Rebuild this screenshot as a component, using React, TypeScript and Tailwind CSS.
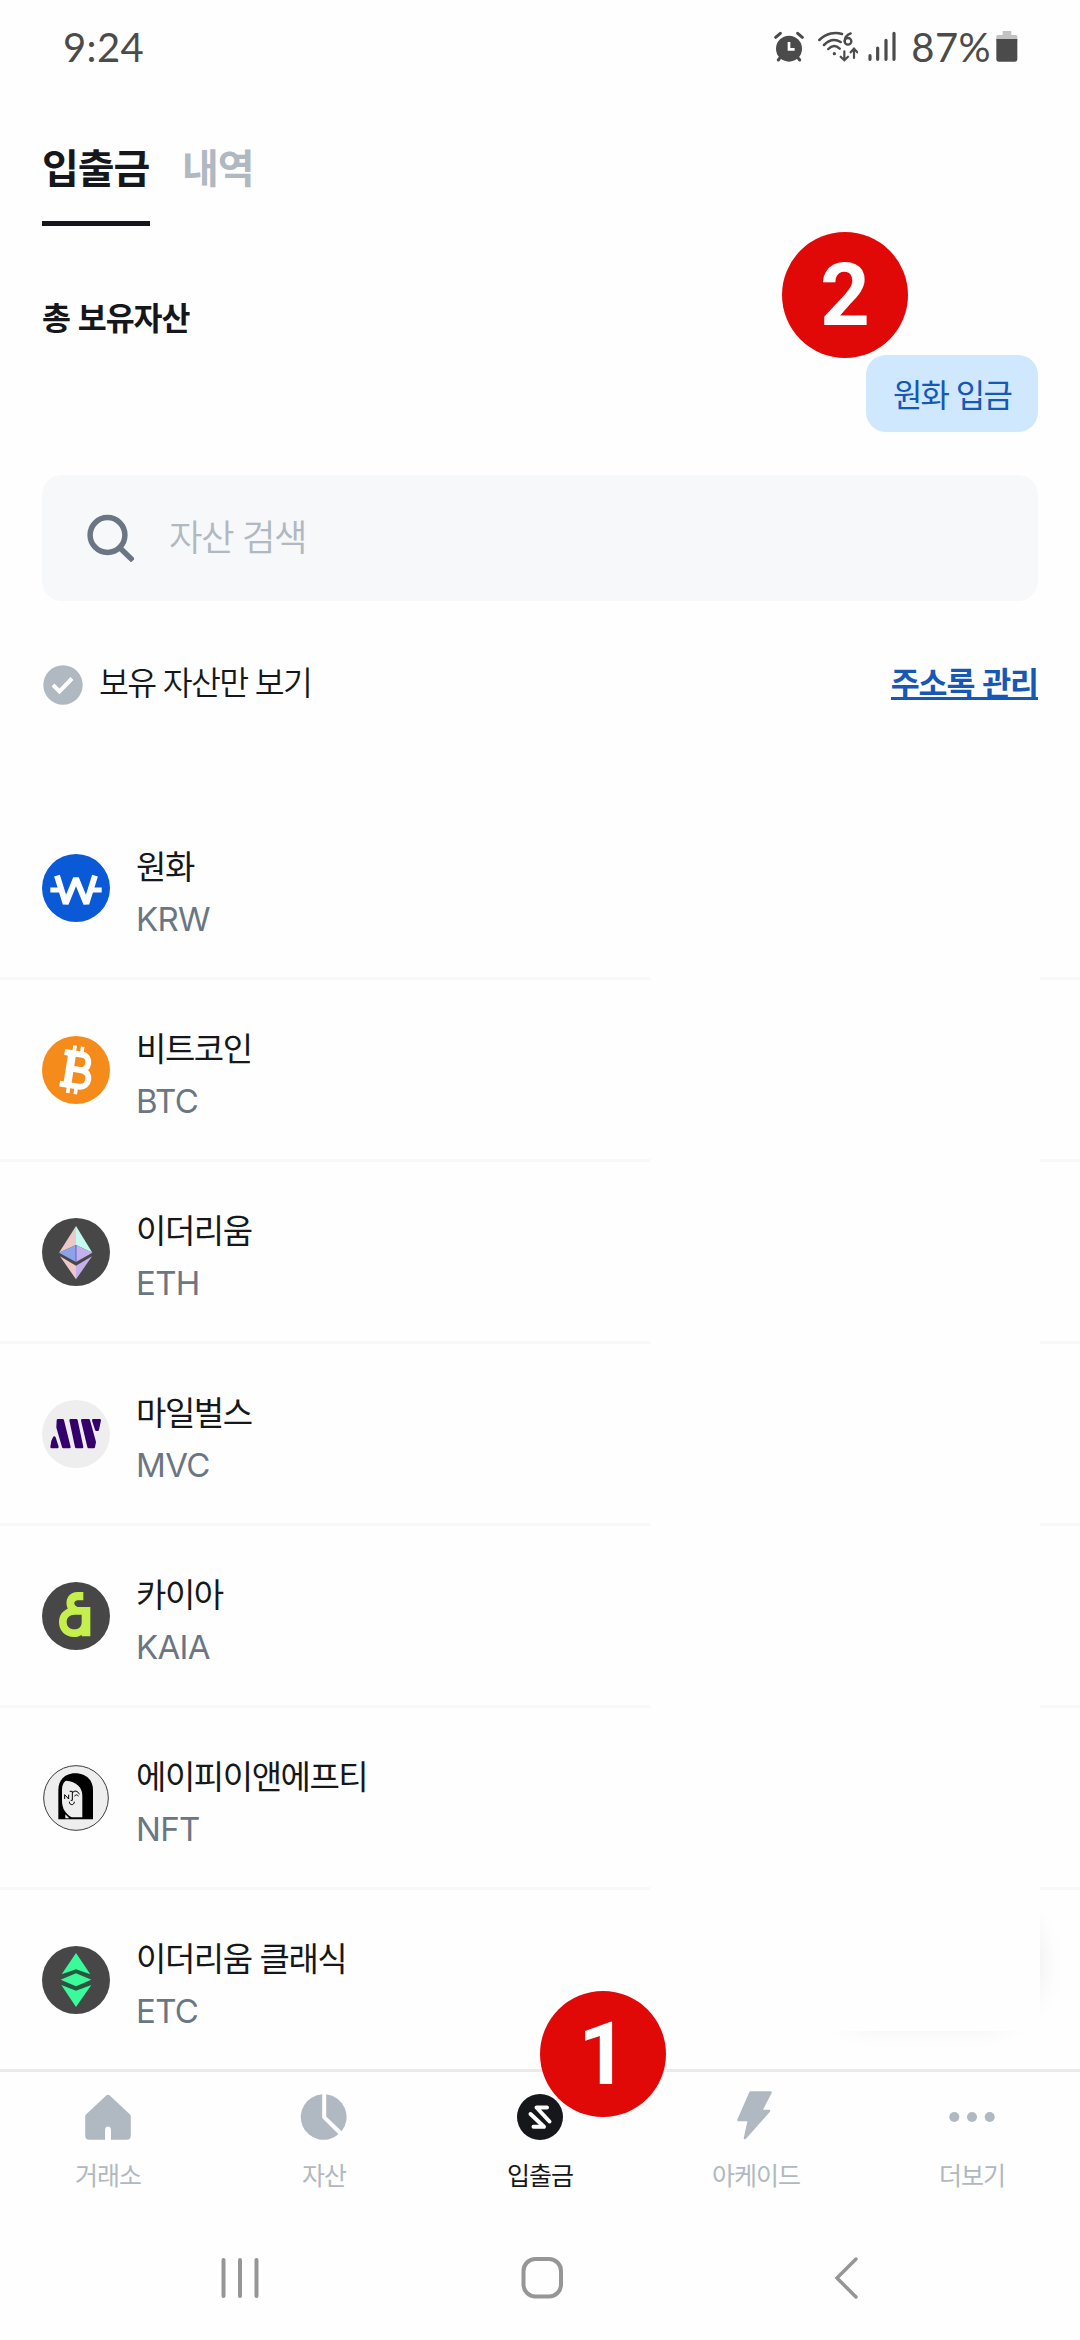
import type { ReactNode } from 'react';

const hangul = "font-['Noto_Sans_CJK_KR',sans-serif] [word-spacing:0.06em]";

function KrwIcon() {
  return (
    <svg viewBox="0 0 204 204" className="size-[68px]">
      <circle cx="102" cy="102" r="102" fill="#0a59d6" />
      <path d="M25 108H62M142 108H179" stroke="#fff" strokeWidth="15" />
      <path d="M45 65L71 149L102 73L133 149L159 65" fill="none" stroke="#fff" strokeWidth="18" strokeLinejoin="bevel" />
    </svg>
  );
}

function BtcIcon() {
  return (
    <svg viewBox="0 0 204 204" className="size-[68px]">
      <circle cx="102" cy="102" r="102" fill="#f58b1b" />
      <g transform="rotate(9 102 102)" fill="none" stroke="#fff">
        <path d="M88 30V52M111 30V52M88 152V174M111 152V174" strokeWidth="11" />
        <path d="M60 54H114C142 54 142 100 114 100H84M84 100H118C151 100 151 150 118 150H60" strokeWidth="18" />
        <path d="M83 54V150" strokeWidth="24" />
      </g>
    </svg>
  );
}

function EthIcon() {
  return (
    <svg viewBox="0 0 204 204" className="size-[68px]">
      <circle cx="102" cy="102" r="102" fill="#474747" />
      <path d="M102 24L51 104L102 81Z" fill="#ecc9c6" />
      <path d="M102 24L151 104L102 81Z" fill="#c3fbf3" />
      <path d="M102 81L51 104L102 132Z" fill="#8da3e9" />
      <path d="M102 81L151 104L102 132Z" fill="#c4b0ec" />
      <path d="M54 115L102 143V184Z" fill="#ecc9c6" />
      <path d="M150 115L102 143V184Z" fill="#c4b0ec" />
      <path d="M102 81V132" stroke="#4f54b8" strokeWidth="2.5" />
    </svg>
  );
}

function MvcIcon() {
  return (
    <svg viewBox="0 0 204 204" className="size-[68px]">
      <circle cx="102" cy="102" r="102" fill="#eee" />
      <g fill="#34006c" stroke="#34006c" strokeWidth="8" strokeLinejoin="round">
        <path d="M48 61H62L82 141H64L47 82Z" />
        <path d="M86 61H103L120 141H103Z" />
        <path d="M121 61H140L158 126L155 141H140Z" />
        <path d="M154 61H173L167 89H163Z" />
        <path d="M37 113L46 141H29L32 123Z" />
      </g>
    </svg>
  );
}

function KaiaIcon() {
  return (
    <svg viewBox="0 0 204 204" className="size-[68px]">
      <circle cx="102" cy="102" r="102" fill="#474747" />
      <path
        fillRule="evenodd"
        fill="#c5f04b"
        d="M124 30V55H111C99 55 94 61 99 70L106 75H145V163H119V158C113 162 106 165 96 165C69 165 51 146 51 120C51 100 61 87 77 80C66 52 82 30 107 30ZM98 98C83 98 74 107 74 120C74 133 83 142 97 142C112 142 119 133 119 120V98Z"
      />
    </svg>
  );
}

function NftIcon() {
  return (
    <svg viewBox="0 0 204 204" className="size-[68px]">
      <circle cx="102" cy="102" r="97" fill="#eee" stroke="#3a3a3a" strokeWidth="3" />
      <path d="M49 166V78C49 45 73 28 99 28C130 28 153 46 153 78V166Z" fill="#000" />
      <path d="M72 50C62 56 60 67 60 82V110C60 133 70 149 89 160H121V95C121 70 103 53 72 50Z" fill="#eee" />
      <path d="M70 151L82 163H70Z" fill="#eee" />
      <path
        d="M68 105V92L80 105V92M83 82H91V109H86M91 87C96 78 108 80 112 91M98 97C100 91 107 91 109 97M82 113C82 125 97 125 97 113"
        fill="none"
        stroke="#000"
        strokeWidth="3"
      />
    </svg>
  );
}

function EtcIcon() {
  return (
    <svg viewBox="0 0 204 204" className="size-[68px]">
      <circle cx="102" cy="102" r="102" fill="#474747" />
      <path d="M102 70L145 84V92L102 80L59 92V84ZM102 133L145 119V110L102 122L59 110V119Z" fill="#1c5c3c" />
      <path d="M102 21L145 85L102 70L59 85Z" fill="#3afb99" />
      <path d="M102 82L148 101L102 121L56 101Z" fill="#3afb99" />
      <path d="M102 183L148 117L102 134L58 117Z" fill="#3afb99" />
    </svg>
  );
}

const assets = [
  { name: '원화', symbol: 'KRW', icon: <KrwIcon /> },
  { name: '비트코인', symbol: 'BTC', icon: <BtcIcon /> },
  { name: '이더리움', symbol: 'ETH', icon: <EthIcon /> },
  { name: '마일벌스', symbol: 'MVC', icon: <MvcIcon /> },
  { name: '카이아', symbol: 'KAIA', icon: <KaiaIcon /> },
  { name: '에이피이앤에프티', symbol: 'NFT', icon: <NftIcon /> },
  { name: '이더리움 클래식', symbol: 'ETC', icon: <EtcIcon /> },
];

const navItems = [
  {
    label: '거래소',
    icon: (
      <svg viewBox="0 0 48 48" className="size-12" fill="#b0b8c1">
        <path d="M22.5 2.3Q24 1 25.5 2.3L46 21.5Q46.8 22.3 46.8 24V42.5Q46.8 46.8 42.5 46.8H27V37Q27 33.5 24 33.5Q21 33.5 21 37V46.8H5.5Q1.2 46.8 1.2 42.5V24Q1.2 22.3 2 21.5Z" />
      </svg>
    ),
  },
  {
    label: '자산',
    icon: (
      <svg viewBox="0 0 48 48" className="size-12" fill="#b0b8c1">
        <path d="M22.2 1.3V25L38.5 41.3A22.8 22.8 0 1 1 22.2 1.3Z" />
        <path d="M26.2 1.3A22.8 22.8 0 0 1 41.6 38.2L26.2 23.5Z" />
      </svg>
    ),
  },
  {
    label: '입출금',
    active: true,
    icon: (
      <svg viewBox="0 0 48 48" className="size-12">
        <circle cx="24" cy="24" r="23" fill="#15171a" />
        <path
          d="M31 14.5H20.5L33.5 28.5M14.5 21L28 33.8H17.5"
          fill="none"
          stroke="#fff"
          strokeWidth="4"
          strokeLinecap="round"
          strokeLinejoin="round"
        />
      </svg>
    ),
  },
  {
    label: '아케이드',
    icon: (
      <svg viewBox="0 0 48 52" className="h-[52px] w-12" fill="#b0b8c1" stroke="#b0b8c1" strokeWidth="2.5" strokeLinejoin="round">
        <path d="M18.5 1.5H38.5L29 20H37L13 47L17 29H6.5Z" />
      </svg>
    ),
  },
  {
    label: '더보기',
    icon: (
      <svg viewBox="0 0 48 48" className="size-12" fill="#b0b8c1">
        <circle cx="6.3" cy="24" r="5" />
        <circle cx="24" cy="24" r="5" />
        <circle cx="41.7" cy="24" r="5" />
      </svg>
    ),
  },
];

function StatusBar() {
  return (
    <div className="flex h-24 items-start justify-between pt-[31px] pr-[62px] pl-[63px] font-['Lato',sans-serif] text-[40px] leading-8 text-[#4b4b4b]">
      <span className="tracking-[0.01em]">9:24</span>
      <div className="flex items-start">
        <svg viewBox="0 0 90 96" className="mr-[14px] h-8 w-[30px]" fill="none" stroke="#4b4b4b" strokeLinecap="round">
          <circle cx="45" cy="53" r="39" fill="#4b4b4b" stroke="none" />
          <path d="M5 19L19 7M85 19L71 7M13 87L19 79M77 87L71 79" strokeWidth="9" />
          <path d="M45 33V55H62" stroke="#fff" strokeWidth="8" strokeLinecap="butt" />
        </svg>
        <svg viewBox="0 0 120 96" className="mr-[10px] h-8 w-10" fill="none" stroke="#4b4b4b" strokeWidth="7.5" strokeLinecap="round">
          <path d="M4 27C25 6 52 2 72 9M18 42C34 26 51 23 68 33M31 54C42 42 54 42 65 53" />
          <circle cx="49" cy="68" r="3" fill="#4b4b4b" strokeWidth="4" />
          <path d="M98 7C87 11 80 21 80 31" strokeWidth="7" />
          <circle cx="90" cy="31" r="10" strokeWidth="7" />
          <path d="M79 61V87M68 77L79 88L90 77M108 81V55M98 64L108 53L118 64" strokeWidth="6.5" />
        </svg>
        <svg viewBox="0 0 84 96" className="mr-[15px] h-8 w-7" stroke="#4b4b4b" strokeWidth="9.5" strokeLinecap="round">
          <path d="M6 74V85M29 51V85M54 28V85M78 7V85" />
        </svg>
        <span className="tracking-[0.01em]">87%</span>
        <svg viewBox="0 0 66 96" className="ml-[5px] h-8 w-[22px]">
          <path d="M20 0H46V12H60Q64 12 64 18V30H1V18Q1 12 5 12H20Z" fill="#c2c2c2" />
          <path d="M1 24H64V84Q64 92 56 92H9Q1 92 1 84Z" fill="#4b4b4b" />
        </svg>
      </div>
    </div>
  );
}

function StepBadge({ className, children }: { className: string; children: ReactNode }) {
  return (
    <div
      className={`absolute z-20 flex size-[126px] items-center justify-center rounded-full bg-[#e10808] font-['Roboto',sans-serif] text-[87px] leading-none font-bold text-white ${className}`}
    >
      {children}
    </div>
  );
}

export default function App() {
  return (
    <div className="relative flex h-[2340px] w-[1080px] flex-col overflow-hidden bg-[#fefefe] text-[#15171a]">
      <StatusBar />

      <div className={`flex h-[130px] items-start gap-[32px] px-[42px] text-[40px] font-bold tracking-[-0.027em] ${hangul}`}>
        <div className="h-[130px] w-[108px] border-b-[5px] border-[#15171a] pt-10 leading-[60px] whitespace-nowrap">입출금</div>
        <div className="pt-10 leading-[60px] text-[#b0b8c1]">내역</div>
      </div>

      <div className="h-[129px] px-[42px] pt-[67px]">
        <h2 className={`text-[31.5px] leading-[46px] font-bold tracking-[-0.035em] ${hangul}`}>총 보유자산</h2>
      </div>

      <div className="flex h-[120px] justify-end pr-[42px]">
        <button className={`h-[77px] w-[172px] rounded-[20px] bg-[#cfe8fd] pb-0.5 text-[32px] tracking-[-0.054em] text-[#1757b5] ${hangul}`}>
          원화 입금
        </button>
      </div>

      <div className="mx-[42px] flex h-[126px] shrink-0 items-center rounded-[20px] bg-[#f7f8fa] pr-6 pl-[44px]">
        <svg viewBox="0 0 48 48" className="size-12" fill="none" stroke="#6b7684" strokeWidth="5.5">
          <circle cx="21.5" cy="21" r="17.4" />
          <path d="M33.5 33.5L47 46.5" />
        </svg>
        <span className={`-mt-[3px] ml-[35px] text-[36.5px] font-[350] tracking-[-0.042em] text-[#b0b8c1] ${hangul}`}>자산 검색</span>
      </div>

      <div className="flex h-[197px] items-start justify-between pt-[58px] pr-[42px] pl-[43px]">
        <div className="flex items-start">
          <svg viewBox="0 0 40 40" className="mt-[6px] size-10">
            <circle cx="20" cy="20" r="19.7" fill="#b0b8c1" />
            <path d="M10 20L16.5 26.5L29 13.5" fill="none" stroke="#fff" strokeWidth="4" />
          </svg>
          <span className={`ml-[16px] text-[32.5px] leading-[44px] font-[350] tracking-[-0.053em] ${hangul}`}>보유 자산만 보기</span>
        </div>
        <a className={`h-[41px] border-b-[3px] border-[#1757b5] text-[31.5px] leading-[44px] font-bold tracking-[-0.035em] text-[#1757b5] ${hangul}`}>
          주소록 관리
        </a>
      </div>

      <ul className="relative h-[1271px] overflow-hidden">
        {assets.map((asset) => (
          <li key={asset.symbol} className="flex h-[182px] items-start border-b-[3px] border-[#f7f8f9] px-[42px]">
            <div className="mt-14">{asset.icon}</div>
            <div className="ml-[26px] pt-[43px]">
              <p className={`text-[33px] leading-[48px] tracking-[-0.044em] ${hangul}`}>{asset.name}</p>
              <p className="mt-[6px] font-['Inter',sans-serif] text-[33px] leading-[48px] tracking-[-0.02em] text-[#6b7684]">{asset.symbol}</p>
            </div>
          </li>
        ))}
        {/* floating button, only the edge of its shadow is visible */}
        <li className="absolute top-[1107px] left-[815px] h-[116px] w-[222px] rounded-full shadow-[0_0_30px_rgba(0,0,0,0.1)]" />
        <li className="absolute top-0 left-[650px] h-[1233px] w-[390px] bg-[#fefefe]" />
      </ul>

      <nav className="grid h-[151px] grid-cols-5 border-t-[3px] border-[#e9ebeb]">
        {navItems.map((item) => (
          <div key={item.label} className={`flex flex-col items-center pt-[21px] text-[25px] leading-9 ${item.active ? 'text-[#15171a]' : 'text-[#b0b8c1]'}`}>
            <div className="flex h-12 items-center">{item.icon}</div>
            <span className={`mt-[15px] tracking-[-0.04em] ${hangul}`}>{item.label}</span>
          </div>
        ))}
      </nav>

      <div className="flex h-[120px] items-start pt-9 pl-[220px]">
        <svg viewBox="0 0 40 44" className="h-11 w-10" stroke="#969696" strokeWidth="4" strokeLinecap="round">
          <path d="M3.5 4V40M20 4V40M36.5 4V40" />
        </svg>
        <svg viewBox="0 0 44 44" className="ml-[260px] size-11" fill="none" stroke="#969696" strokeWidth="4">
          <rect x="3.5" y="3" width="37.5" height="37.5" rx="12" />
        </svg>
        <svg viewBox="0 0 28 44" className="ml-[268px] h-11 w-7" fill="none" stroke="#969696" strokeWidth="3.5" strokeLinecap="round">
          <path d="M24 3L5 22L24 41" />
        </svg>
      </div>

      <StepBadge className="top-[232px] left-[782px]">2</StepBadge>
      <StepBadge className="top-[1991px] left-[540px]">1</StepBadge>
    </div>
  );
}
